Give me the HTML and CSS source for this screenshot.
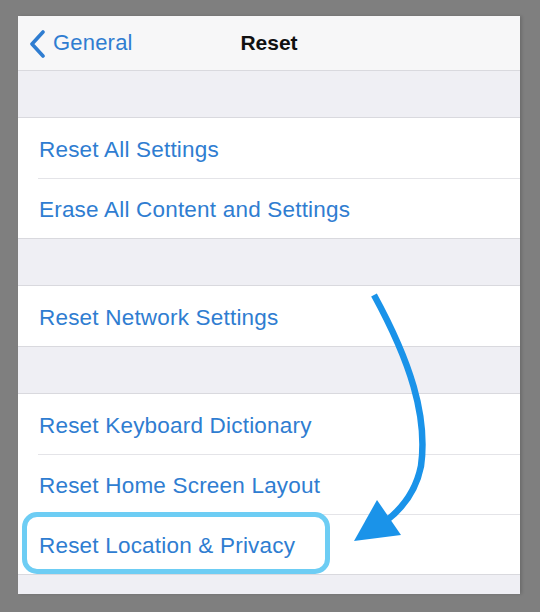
FILE: index.html
```html
<!DOCTYPE html>
<html lang="en">
<head>
    <meta charset="UTF-8">
    <meta name="viewport" content="width=device-width, initial-scale=1.0">
    <title>Reset</title>
    <link rel="stylesheet" href="styles.css">
</head>
<body>
    <div class="screen">
        <div class="navbar">
            <a class="back">
                <svg class="chevron" width="17" height="28" viewBox="0 0 17 28">
                    <path d="M14 2 L3 14 L14 26" fill="none" stroke="currentColor" stroke-width="3.6" stroke-linecap="round" stroke-linejoin="round"/>
                </svg>
                <span>General</span>
            </a>
            <div class="title">Reset</div>
        </div>

        <div class="gap"></div>
        <ul class="group">
            <li class="row">Reset All Settings</li>
            <li class="row">Erase All Content and Settings</li>
        </ul>

        <div class="gap"></div>
        <ul class="group">
            <li class="row">Reset Network Settings</li>
        </ul>

        <div class="gap"></div>
        <ul class="group">
            <li class="row">Reset Keyboard Dictionary</li>
            <li class="row">Reset Home Screen Layout</li>
            <li class="row highlighted">Reset Location &amp; Privacy</li>
        </ul>
        <div class="gap bottom"></div>

        <!-- hand-drawn pointer down to the last option -->
        <svg class="pointer" width="502" height="578" viewBox="0 0 502 578">
            <path d="M356 279 C 392 345, 410 400, 403 450 C 398 475, 385 492, 368 505" fill="none" stroke="#1a93e9" stroke-width="6.5"/>
            <polygon points="336,525 359,484 383,519" fill="#1a93e9"/>
        </svg>
    </div>
</body>
</html>
```

FILE: styles.css
```css
:root {
    --ios-blue: #2f7dd1;
    --group-bg: #efeff4;
    --hairline: #d9d9de;
}

*,
*::before,
*::after {
    margin: 0;
    padding: 0;
    box-sizing: border-box;
}

body {
    background-color: #7f7f7f;
    font-family: "Liberation Sans", Arial, sans-serif;
    padding: 16px 20px 18px 18px;
}

.screen {
    position: relative;
    width: 502px;
    height: 578px;
    background: var(--group-bg);
    overflow: hidden;
    box-shadow: 2px 0 3px rgba(0, 0, 0, 0.15);
}

.navbar {
    height: 55px;
    background: #f7f7f8;
    border-bottom: 1px solid var(--hairline);
    display: flex;
    align-items: center;
    position: relative;
}

.back {
    display: flex;
    align-items: center;
    gap: 7px;
    padding-left: 11px;
    color: var(--ios-blue);
    font-size: 22px;
    letter-spacing: 0.2px;
}

.chevron {
    margin-top: 1px;
}

.title {
    position: absolute;
    left: 0;
    right: 0;
    text-align: center;
    font-size: 21px;
    font-weight: bold;
    color: #111;
    pointer-events: none;
}

.gap {
    height: 46px;
}

.gap.bottom {
    height: 22px;
}

.group {
    list-style: none;
    background: #fff;
    border-top: 1px solid var(--hairline);
    border-bottom: 1px solid var(--hairline);
}

.row {
    height: 60px;
    display: flex;
    align-items: center;
    padding: 3px 0 0 21px;
    font-size: 22.5px;
    letter-spacing: 0.2px;
    color: var(--ios-blue);
    position: relative;
}

.row + .row::before {
    content: "";
    position: absolute;
    top: 0;
    left: 20px;
    right: 0;
    border-top: 1px solid #e4e4e8;
}

.row.highlighted::after {
    content: "";
    position: absolute;
    left: 4px;
    top: -2px;
    width: 308px;
    height: 62px;
    border: 5px solid #6dcdf4;
    border-radius: 15px;
}

.pointer {
    position: absolute;
    left: 0;
    top: 0;
    pointer-events: none;
}
```
